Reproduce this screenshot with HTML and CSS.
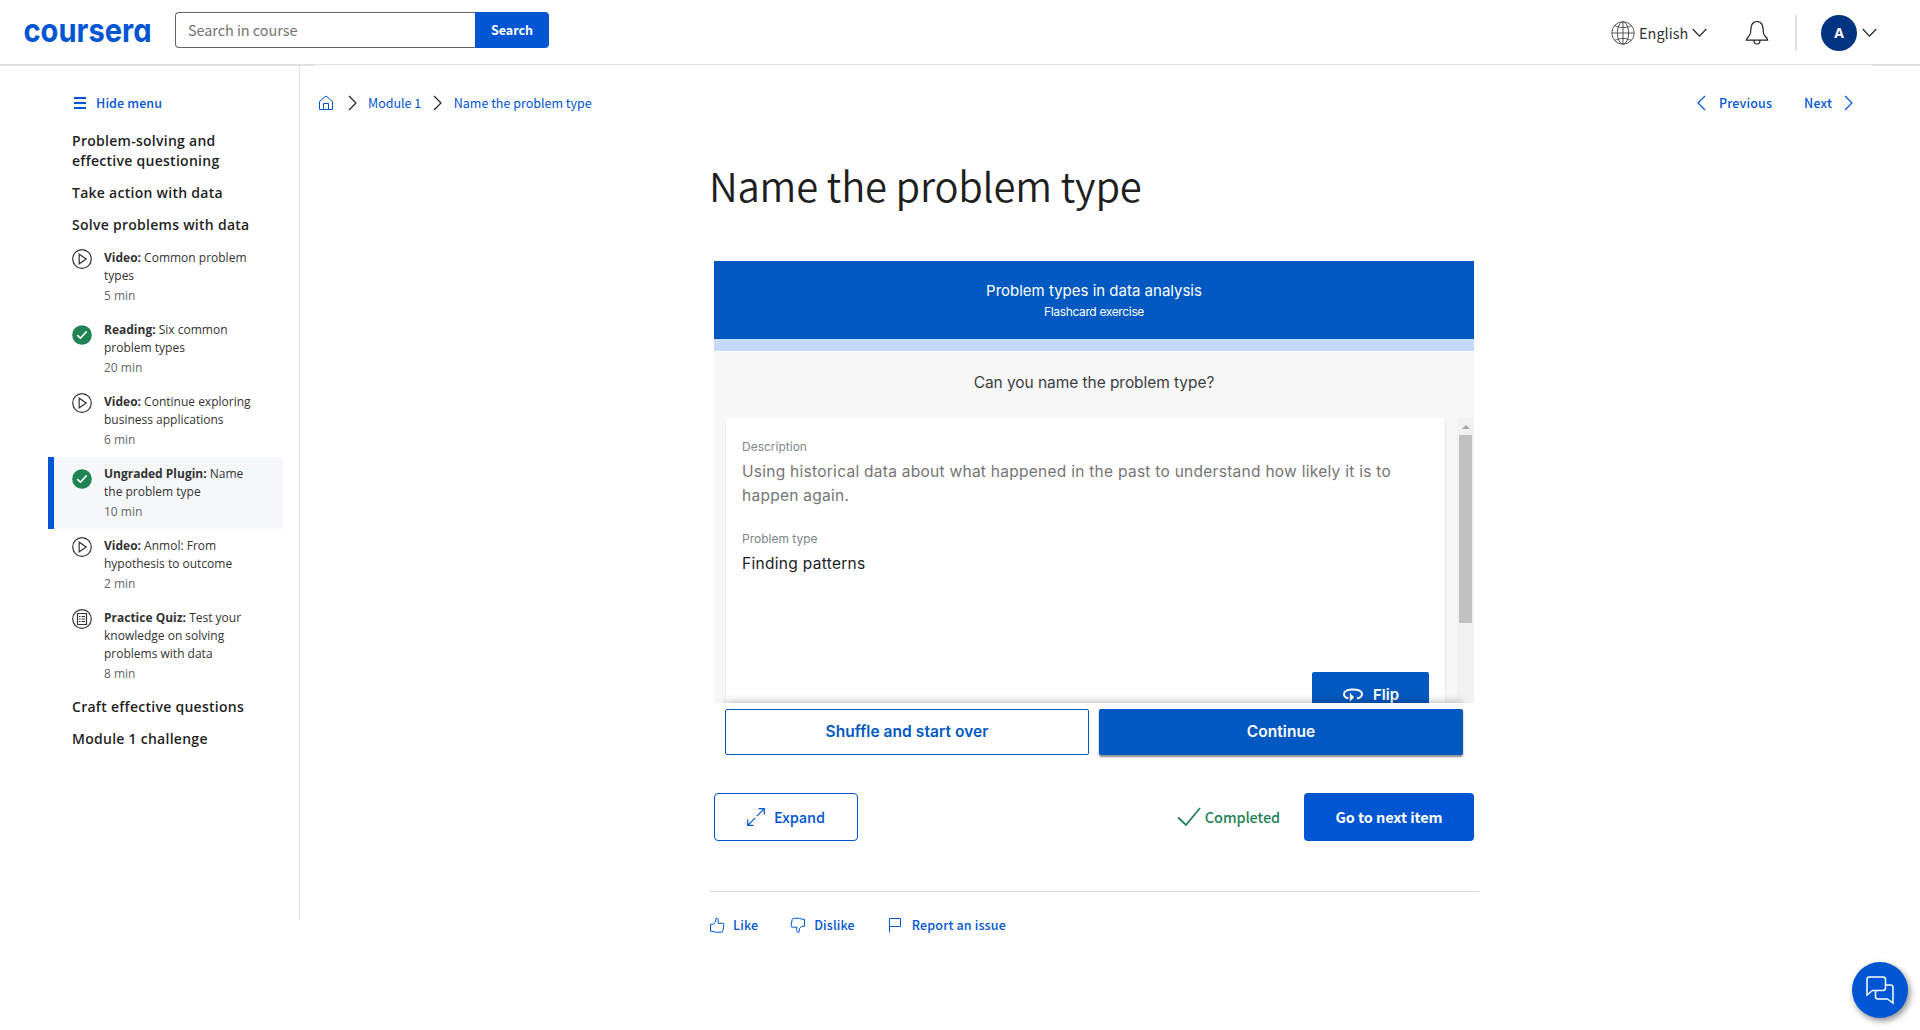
FILE: index.html
```html
<!DOCTYPE html>
<html lang="en">
<head>
<meta charset="utf-8">
<title>Name the problem type | Coursera</title>
<link rel="stylesheet" href="styles.css">
</head>
<body>
<header class="topbar">
  <a class="logo" aria-label="Coursera"><svg width="134" height="46" viewBox="0 0 134 46"><text class="logo-text" x="1.500" y="32.500" textLength="128" lengthAdjust="spacingAndGlyphs">coursera</text></svg></a>
  <form class="search">
    <div class="search-field"><span class="t-placeholder">Search in course</span></div>
    <button class="search-button" type="button"><span class="t-search">Search</span></button>
  </form>
  <nav class="account">
    <svg class="globe" width="24" height="24" viewBox="0 0 24 24"><circle cx="12" cy="12" r="11.2"/><ellipse cx="12" cy="12" rx="5.6" ry="11.2"/><path d="M.8 12h22.4M12 .8v22.4M3.8 4.6c4 2.6 12.4 2.6 16.4 0M3.8 19.4c4-2.6 12.4-2.6 16.4 0"/></svg>
    <span class="t-lang">English</span>
    <svg class="chev chev-lang" width="15" height="10" viewBox="0 0 15 10"><path d="M.7 1l6.8 7.2L14.300 1"/></svg>
    <svg class="bell" width="24" height="26" viewBox="0 0 24 26"><path d="M1.300 20.200h21.400c-.2-2.600-3.700-3.900-4.200-7.200-.4-3.200-.2-6-1.500-8.600C15.900 2.400 14.200 1.500 12 1.500s-3.900.9-5 2.900c-1.300 2.600-1.100 5.400-1.500 8.600-.5 3.300-4 4.600-4.200 7.200zM9 20.500c0 2 1.300 3.500 3 3.500s3-1.500 3-3.500"/></svg>
    <span class="divider"></span>
    <span class="avatar">A</span>
    <svg class="chev" width="15" height="10" viewBox="0 0 15 10"><path d="M.7 1l6.800 7.200L14.300 1"/></svg>
  </nav>
</header>
<div class="layout">
  <aside class="sidebar">
    <a class="hide-menu"><span class="bars"></span><span class="t-hide">Hide menu</span></a>
    <h3 class="lesson">Problem-solving and<br>effective questioning</h3>
    <h3 class="lesson">Take action with data</h3>
    <h3 class="lesson">Solve problems with data</h3>
    <ul class="items">
      <li class="item"><svg class="ico" width="20" height="20" viewBox="0 0 20 20"><circle cx="10" cy="10" r="9.300"/><path d="M7.200 5.200v9.600l7-4.800z"/></svg><div class="info"><p><b>Video:</b> Common problem types</p><p class="mins">5 min</p></div></li>
      <li class="item done"><svg class="ico" width="20" height="20" viewBox="0 0 20 20"><circle cx="10" cy="10" r="9.800"/><path d="M5.200 10.200l3.200 3 6.300-6.800"/></svg><div class="info"><p><b>Reading:</b> Six common problem types</p><p class="mins">20 min</p></div></li>
      <li class="item"><svg class="ico" width="20" height="20" viewBox="0 0 20 20"><circle cx="10" cy="10" r="9.300"/><path d="M7.200 5.200v9.600l7-4.800z"/></svg><div class="info"><p><b>Video:</b> Continue exploring business applications</p><p class="mins">6 min</p></div></li>
      <li class="item done current"><svg class="ico" width="20" height="20" viewBox="0 0 20 20"><circle cx="10" cy="10" r="9.800"/><path d="M5.200 10.200l3.200 3 6.300-6.800"/></svg><div class="info"><p><b>Ungraded Plugin:</b> Name the problem type</p><p class="mins">10 min</p></div></li>
      <li class="item"><svg class="ico" width="20" height="20" viewBox="0 0 20 20"><circle cx="10" cy="10" r="9.300"/><path d="M7.200 5.200v9.600l7-4.800z"/></svg><div class="info"><p><b>Video:</b> Anmol: From hypothesis to outcome</p><p class="mins">2 min</p></div></li>
      <li class="item"><svg class="ico quiz" width="20" height="20" viewBox="0 0 20 20"><circle cx="10" cy="10" r="9.300"/><path class="sheet" d="M5.500 4.500h9v11h-9z"/><path class="rows" d="M7 7.500h1.500M9.500 7.500h3.500M7 10h1.500M9.500 10h3.500M7 12.500h1.500M9.500 12.500h3.500"/></svg><div class="info"><p><b>Practice Quiz:</b> Test your knowledge on solving problems with data</p><p class="mins">8 min</p></div></li>
    </ul>
    <h3 class="lesson">Craft effective questions</h3>
    <h3 class="lesson">Module 1 challenge</h3>
  </aside>
  <main class="main">
    <div class="crumb-row">
      <nav class="crumbs">
        <svg class="home" width="16" height="16" viewBox="0 0 16 16"><path d="M1.500 6.500L8 1l6.500 5.500v8h-13zM5.500 14.500v-6h5v6"/></svg>
        <svg class="arrow" width="9" height="16" viewBox="0 0 9 16"><path d="M1 1l7 7-7 7"/></svg>
        <span class="t-crumb">Module 1</span>
        <svg class="arrow arrow-2" width="9" height="16" viewBox="0 0 9 16"><path d="M1 1l7 7-7 7"/></svg>
        <span class="t-crumb">Name the problem type</span>
      </nav>
      <nav class="pager">
        <svg width="9" height="16" viewBox="0 0 9 16"><path d="M8 1L1 8l7 7"/></svg>
        <span class="t-bold t-prev">Previous</span>
        <span class="t-bold t-next">Next</span>
        <svg width="9" height="16" viewBox="0 0 9 16"><path d="M1 1l7 7-7 7"/></svg>
      </nav>
    </div>
    <article class="content">
      <h1 class="title">Name the problem type</h1>
      <section class="plugin">
        <div class="banner">
          <p class="banner-title">Problem types in data analysis</p>
          <p class="banner-sub">Flashcard exercise</p>
        </div>
        <div class="strip"></div>
        <p class="question">Can you name the problem type?</p>
        <div class="scroller">
          <div class="card">
            <p class="label">Description</p>
            <p class="answer muted">Using historical data about what happened in the past to understand how likely it is to happen again.</p>
            <p class="label label-2">Problem type</p>
            <p class="answer">Finding patterns</p>
            <button class="flip" type="button"><svg width="22" height="16" viewBox="0 0 22 16"><path d="M6.500 11.300C3.200 10.700 2 9.100 2 7.200 2 4.300 5.800 2.500 11 2.500s9 1.800 9 4.700c0 2-1.600 3.500-5 4.200"/><path class="tip" d="M7.800 5.800v8.900l4.400-4.500z"/></svg><span>Flip</span></button>
          </div>
          <div class="track"><span class="up"></span><span class="thumb"></span></div>
        </div>
        <div class="plugin-actions">
          <button class="shuffle" type="button">Shuffle and start over</button>
          <button class="continue" type="button">Continue</button>
        </div>
      </section>
      <div class="actions">
        <button class="expand" type="button"><svg width="18" height="18" viewBox="0 0 18 18"><path d="M11.500.7h5.800v5.800M17.300.7l-7.500 7.500M6.500 17.300H.7v-5.800M.7 17.300l7.500-7.500"/></svg><span class="t-action">Expand</span></button>
        <span class="completed"><svg width="24" height="20" viewBox="0 0 24 20"><path d="M1 10.500l8 7.500L23 1"/></svg><span class="t-action">Completed</span></span>
        <button class="next-item" type="button"><span class="t-action">Go to next item</span></button>
      </div>
      <footer class="feedback">
        <a class="fb"><svg width="16" height="16" viewBox="0 0 16 16"><path d="M4.200 7.200L6.500 5l.5-3.700c1.900-.3 2.600 1 2.300 2.600L9 6.300h5.200c.7 0 .8.900.6 1.500l-.9 6c-.2.900-.8 1.400-1.500 1.400H6.500L4 14.300H1.500V7.200z"/></svg><span class="t-bold">Like</span></a>
        <a class="fb"><svg width="16" height="16" viewBox="0 0 16 16"><path d="M11.800 9.300l-2.300 2.200-.5 3.700c-1.900.3-2.600-1-2.300-2.600l.3-2.400H1.800c-.7 0-.8-.9-.6-1.500l.9-6c.2-.9.8-1.400 1.500-1.400h5.900l2.500.9h2.500v7.100z"/></svg><span class="t-bold">Dislike</span></a>
        <a class="fb report"><svg width="16" height="16" viewBox="0 0 16 16"><path d="M2.500 15.500V1.500h11v8h-11"/></svg><span class="t-bold">Report an issue</span></a>
      </footer>
    </article>
  </main>
</div>
<button class="chat" type="button" aria-label="Chat"><svg width="30" height="30" viewBox="0 0 30 30"><path d="M4 2h14q2.500 0 2.500 2.500v8.500q0 2.500-2.500 2.500H7.500L2 20V4.500Q2 2 4 2zM20.500 10h5q2.500 0 2.500 2v16l-5.500-4H13q-2.500 0-2.500-2.500v-6"/></svg></button>
</body>
</html>
```
FILE: styles.css
```css
* { box-sizing: border-box; }
body, h1, h3, p, ul { margin: 0; padding: 0; }
body {
  width: 1920px; height: 1030px; overflow: hidden; background: #fff; color: #1f1f1f;
  font-family: "Noto Sans CJK SC", "Open Sans", sans-serif;
  --blue: #0056d2; --deep: #0059c1;
}
button { border: 0; margin: 0; padding: 0; font-family: inherit; }
svg { display: block; flex: none; fill: none; stroke: currentColor; stroke-width: 1.2; }
span { white-space: nowrap; }

.topbar {
  height: 65px; display: flex; align-items: flex-start; border-bottom: 1px solid #e1e1e1;
}
.logo { margin: 9px 0 0 22px; width: 153px; }
.logo-text { font: 700 33px Inter, sans-serif; font-feature-settings: "cv11"; fill: var(--blue); stroke: none; }
.search { display: flex; margin-top: 12px; height: 36px; }
.search-field { width: 300px; border: 1px solid #636363; border-right: 0; border-radius: 4px 0 0 4px; padding-left: 12px; line-height: 32px; color: #757575; }
.t-placeholder { font-size: 14.500px; letter-spacing: -0.08px; }
.search-button { width: 74px; background: var(--blue); color: #fff; border-radius: 0 4px 4px 0; line-height: 34px; }
.t-search { font-size: 12.500px; font-weight: 700; }
.account { margin-left: auto; display: flex; align-items: center; padding: 15px 43px 0 0; height: 51px; }
.globe { stroke: #555; stroke-width: 1; }
.t-lang { font-size: 14.500px; line-height: 22px; margin: 0 0 1px 4px; width: 53px; color: #333; }
.chev { stroke: #222; }
.bell { margin-left: 38px; stroke: #222; }
.divider { width: 2px; height: 36px; margin-left: 26px; background: #e1e1e1; }
.avatar { width: 36px; height: 36px; border-radius: 50%; background: #003481; color: #fff; font: 700 14px/36px "Open Sans", sans-serif; text-align: center; margin: 0 5px 0 24px; }

.layout {
  display: flex;
  background:
    linear-gradient(#e1e1e1, #e1e1e1) 0 0 / 316px 1px no-repeat,
    linear-gradient(#e1e1e1, #e1e1e1) 100% 0 / 48px 1px no-repeat;
}
.sidebar { width: 300px; height: 854px; padding: 27px 16px 0 48px; border-right: 1px solid #e1e1e1; font-family: "Open Sans", sans-serif; }
.hide-menu { display: flex; align-items: center; gap: 10px; height: 22px; margin: 0 0 11px 26px; color: var(--blue); font-family: "Noto Sans CJK SC", sans-serif; }
.bars { width: 12px; height: 12px; border-top: 2px solid; border-bottom: 2px solid; background: linear-gradient(currentColor, currentColor) 0 3px / 12px 2px no-repeat; }
.t-hide { font-size: 12.500px; line-height: 18px; font-weight: 500; letter-spacing: 0.12px; }
.lesson { padding: 6px 0 6px 24px; font-size: 14px; line-height: 20px; font-weight: 600; letter-spacing: 0.27px; }
.items { list-style: none; }
.item { display: flex; gap: 12px; padding: 8px 0 8px 18px; border-left: 6px solid transparent; font-size: 12px; line-height: 18px; color: #333; }
.info { width: 157px; }
.mins { padding-top: 2px; color: #666; }
.ico { stroke: #333; }
.done .ico { margin-top: 4px; fill: #1f8354; stroke: none; }
.done .ico path { fill: none; stroke: #fff; stroke-width: 1.600; }
.current { background: #f5f7f8; border-left-color: var(--blue); }
.quiz .rows { stroke-width: 1; }

.main { flex: 1; }
.crumb-row { display: flex; justify-content: space-between; height: 76px; padding: 0 67px 0 18px; }
.crumbs, .pager { display: flex; align-items: center; height: 76px; color: var(--blue); }
.pager { height: 75px; }
.home { stroke-width: 1; }
.arrow { margin: 0 11px 0 14px; stroke: #222; }
.arrow-2 { margin: 0 11.500px 0 12px; }
.t-crumb { font-size: 12.500px; line-height: 18px; padding-bottom: 1px; }
.t-bold { font-size: 12.500px; line-height: 18px; font-weight: 500; letter-spacing: 0.15px; }
.t-prev { margin: 0 32px 0 13px; }
.t-next { margin-right: 12px; }

.content { width: 770px; margin-left: 409px; }
.title { height: 120px; padding-top: 17px; font-size: 40px; line-height: 54px; font-weight: 350; letter-spacing: -0.22px; color: #1f1f1f; }
.plugin { margin: 0 5px; font-family: Inter, sans-serif; }
.banner { height: 78px; background: var(--deep); color: #fff; text-align: center; padding-top: 19px; }
.banner-title { font-size: 15px; line-height: 22px; }
.banner-sub { font-size: 12px; line-height: 20px; letter-spacing: -0.35px; }
.strip { height: 13px; background: #c6dafb; border-bottom: 1px solid #fff; }
.question { height: 66px; background: #f7f7f7; text-align: center; font-size: 15.500px; line-height: 62px; letter-spacing: -0.06px; color: #3c4043; }
.scroller { position: relative; display: flex; height: 285px; overflow: hidden; background: #f7f7f7; }
.scroller::after { content: ""; position: absolute; left: 12px; right: 12px; bottom: -10px; height: 10px; box-shadow: 0 0 10px rgba(0,0,0,.35); }
.card { width: 719px; height: 340px; margin-left: 12px; padding: 19px 16px 0; background: #fff; border-radius: 4px; box-shadow: 0 1px 2px rgba(0,0,0,.15); }
.label { font-size: 12px; line-height: 20px; color: #80868b; }
.label-2 { margin-top: 22px; }
.answer { font-size: 15.500px; line-height: 24px; padding-top: 3px; margin-bottom: -1px; letter-spacing: 0.3px; color: #202124; }
.muted { color: #757575; letter-spacing: 0.27px; }
.flip { display: flex; align-items: center; gap: 9px; width: 117px; height: 46px; margin: 97px 0 0 auto; padding: 0 0 1px 30px; background: var(--deep); color: #fff; border-radius: 2px; font-size: 15px; font-weight: 600; }
.flip svg { stroke-width: 2; }
.flip .tip { fill: #fff; stroke: none; }
.track { width: 17px; margin-left: 12px; padding: 7px 2px 0; background: #f1f1f1; }
.up { display: block; margin: 0 auto 6px; width: 8px; border: 4px solid transparent; border-top: 0; border-bottom-color: #a3a3a3; }
.thumb { display: block; height: 188px; background: #c1c1c1; }
.plugin-actions { display: flex; gap: 10px; padding: 6px 11px 0; }
.plugin-actions button { width: 364px; height: 46px; padding-bottom: 2px; border-radius: 2px; font-size: 15.500px; font-weight: 600; letter-spacing: 0.06px; }
.plugin-actions .shuffle { border: 1px solid var(--deep); background: #fff; color: var(--deep); }
.plugin-actions .continue { background: var(--deep); color: #fff; box-shadow: 0 2px 2px rgba(0,0,0,.45); }

.actions { display: flex; align-items: center; margin: 38px 5px 0; height: 48px; }
.t-action { font-size: 14.500px; line-height: 22px; font-weight: 500; }
.expand { display: flex; align-items: center; gap: 9px; width: 144px; height: 48px; padding-left: 32px; border: 1px solid var(--blue); border-radius: 4px; background: #fff; color: var(--blue); }
.completed { display: flex; align-items: center; gap: 4px; margin: 0 24px 0 auto; color: #1f8354; }
.completed .t-action { letter-spacing: -0.13px; }
.completed svg { stroke-width: 1.800; }
.next-item { width: 170px; height: 48px; background: var(--blue); color: #fff; border-radius: 4px; }
.next-item .t-action { font-weight: 600; letter-spacing: -0.08px; }
.feedback { display: flex; gap: 32px; margin-top: 50px; border-top: 1px solid #dadce0; padding-top: 23px; color: var(--blue); }
.fb { display: flex; align-items: center; gap: 8px; height: 20px; }
.fb svg { stroke-width: 1; }
.report { gap: 9px; }

.chat { position: absolute; left: 1852px; top: 962px; width: 56px; height: 56px; padding: 13px; border-radius: 50%; background: var(--blue); color: #fff; box-shadow: 2px 3px 6px rgba(0,0,0,.45); }
.chat svg { stroke-width: 1.500; }
```
